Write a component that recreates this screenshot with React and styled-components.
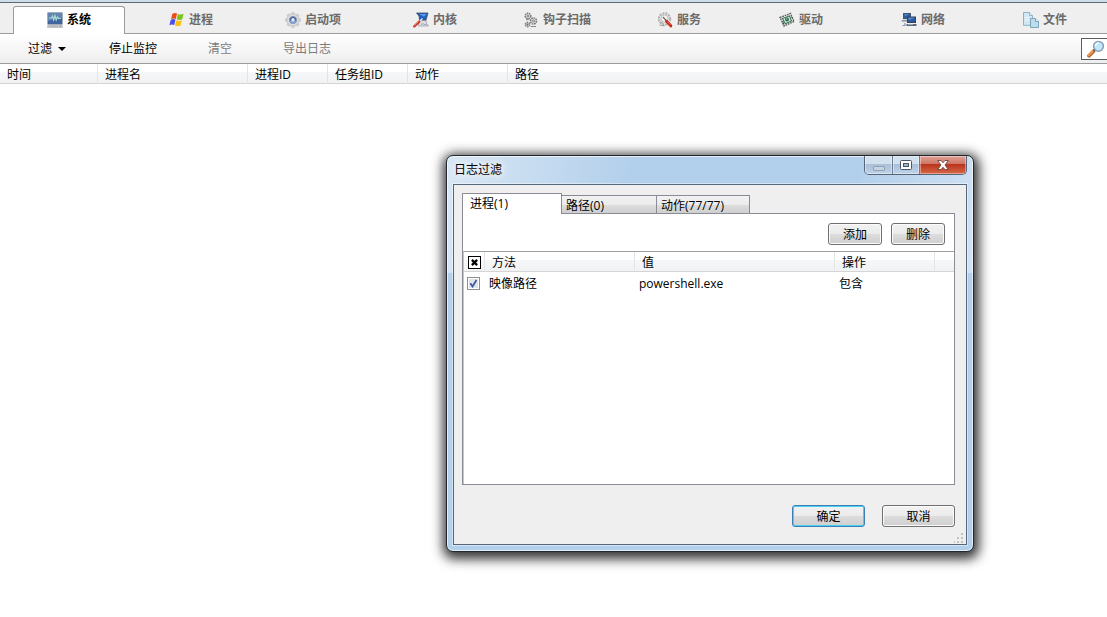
import React, { useState } from "react";
import styled, { createGlobalStyle, css } from "styled-components";

const SystemIcon = () => (
  <svg width="16" height="16" viewBox="0 0 16 16" aria-hidden="true">
    <rect x="0.500" y="0.500" width="15" height="12" rx="0.800" fill="#41659f" stroke="#a3acb9" />
    <path d="M1 1h14v5L1 9z" fill="#6484b4" />
    <path d="M2 6h2.500l1-2 1.200 4L8 3.500l1.200 4.500 1.300-3 1 1.500h2.500" fill="none" stroke="#a9ddd0" strokeWidth="1.200" />
    <path d="M1 13h14l0.600 2.500H0.400z" fill="#d2d3d6" stroke="#a8aaae" strokeWidth="0.600" />
    <path d="M2 14.200h9" stroke="#9a9ca1" strokeWidth="0.700" />
    <rect x="12.500" y="13.700" width="1.500" height="1" fill="#777e8a" />
  </svg>
);

const ProcessIcon = () => (
  <svg width="16" height="16" viewBox="0 0 16 16" aria-hidden="true">
    <path d="M3.300 1.900C5 .7 6.500.8 8.100 1.600L6.800 7C5.200 6.200 3.700 6.200 2 7.200z" fill="#ee4b1c" />
    <path d="M8.800 1.900c1.700.9 3.600 1 5.800-.1L13.300 7.300c-1.900 1-3.700.9-5.600 0z" fill="#7cc514" />
    <path d="M1.700 7.900c1.700-1 3.200-1 4.800-.2L5.200 13.100C3.600 12.300 2.100 12.300.4 13.300z" fill="#4a4fe8" />
    <path d="M7.300 8.200c1.800.9 3.700.9 5.600 0L11.600 13.600c-1.800 1-3.700.9-5.600 0z" fill="#fbc014" />
  </svg>
);

const gearTeeth = [0, 45, 90, 135, 180, 225, 270, 315];

const StartupIcon = () => (
  <svg width="16" height="16" viewBox="0 0 16 16" aria-hidden="true">
    {gearTeeth.map((deg) => (
      <rect
        key={deg}
        x="6.500"
        y="0.400"
        width="3"
        height="4"
        rx="0.800"
        fill="#cfd1d4"
        stroke="#b3b6ba"
        strokeWidth="0.400"
        transform={`rotate(${deg} 8 8)`}
      />
    ))}
    <circle cx="8" cy="8" r="6" fill="#dcdee1" stroke="#b7babf" strokeWidth="0.600" />
    <circle cx="8" cy="8" r="3.600" fill="#3e5b95" stroke="#8796b3" />
    <path d="M5 8.500a3 3 0 0 0 6 0z" fill="#7fa6d8" />
    <circle cx="8" cy="7.700" r="1.700" fill="#e8f1fa" />
  </svg>
);

const KernelIcon = () => (
  <svg width="16" height="16" viewBox="0 0 16 16" aria-hidden="true">
    <path d="M6 8.500L13 8l0.500 3.500 2 2.500H5.500z" fill="#dde1e6" stroke="#8e97a2" strokeWidth="0.700" />
    <path d="M3.500 1h11.500l-2 7H6.500L6 4z" fill="#1f5fc2" stroke="#414d5e" strokeWidth="0.800" />
    <path d="M6 2h7.500L11 4.800z" fill="#5d98ea" />
    <path d="M8 12.500c2-1.800 3 0.600 5.500 0" fill="none" stroke="#98a0aa" />
    <path d="M1.300 14.300L6.500 9.300" stroke="#cf3427" strokeWidth="2.400" strokeLinecap="round" />
    <path d="M1.300 13.700L5.800 9.300" stroke="#f39a86" strokeWidth="0.700" />
    <path d="M6.800 9L9.500 6.500" stroke="#e8ebef" strokeWidth="1.400" />
  </svg>
);

const HookIcon = () => (
  <svg width="16" height="16" viewBox="0 0 16 16" aria-hidden="true">
    <g fill="#e0e0e0" stroke="#7d7d7d">
      <circle cx="5" cy="4" r="2.800" strokeWidth="1.500" strokeDasharray="1.600 0.700" />
      <circle cx="5" cy="4" r="0.900" fill="#fff" />
      <circle cx="10.500" cy="9" r="3" strokeWidth="1.600" strokeDasharray="1.600 0.700" />
      <circle cx="10.500" cy="9" r="1" fill="#fff" />
      <circle cx="4.500" cy="12.500" r="2.200" strokeWidth="1.400" strokeDasharray="1.400 0.700" />
      <circle cx="4.500" cy="12.500" r="0.700" fill="#555" />
    </g>
    <path d="M7.500 14.500h5.500M3 8l3-1" stroke="#8a8a8a" />
  </svg>
);

const ServiceIcon = () => (
  <svg width="16" height="16" viewBox="0 0 16 16" aria-hidden="true">
    <circle cx="7.500" cy="7" r="5.700" fill="#ececec" stroke="#b0b0b0" strokeWidth="2" strokeDasharray="2 1" />
    <circle cx="7.500" cy="6.500" r="3.600" fill="#f8f8f8" stroke="#a9a9a9" strokeWidth="0.800" />
    <path d="M2.500 13l5 1M3.500 9.500l3.500 3" stroke="#9c9c9c" />
    <path d="M6 5L10 9.500" stroke="#6e6e6e" strokeWidth="1.500" />
    <path d="M9.500 9.300L13.800 13.800" stroke="#c8281a" strokeWidth="3" strokeLinecap="round" />
    <path d="M10 9.300L13.500 12.800" stroke="#f07a64" strokeWidth="0.800" />
  </svg>
);

const DriverIcon = () => (
  <svg width="16" height="16" viewBox="0 0 16 16" aria-hidden="true">
    <path d="M1 5.500L11.500 1.500 15 9.500 5 14z" fill="#f0f3f1" stroke="#59625d" strokeWidth="1.400" strokeDasharray="1.700 0.800" />
    <path d="M3.500 6.500L10.500 4 12.500 9 6.300 11.700z" fill="#dcebe2" stroke="#3f7659" strokeWidth="1.100" />
    <circle cx="8" cy="7.500" r="2" fill="#1f6a47" />
    <circle cx="7.800" cy="7" r="0.700" fill="#b9dcc8" />
    <path d="M3.500 9l1.500 3.500M12.500 4.500l1 2" stroke="#39463f" />
  </svg>
);

const NetworkIcon = () => (
  <svg width="16" height="16" viewBox="0 0 16 16" aria-hidden="true">
    <rect x="2.500" y="1.500" width="7" height="5" fill="#2d5da3" stroke="#45526a" />
    <path d="M0.800 8.700h6" stroke="#8f97a3" strokeWidth="1.800" />
    <rect x="6.500" y="5" width="8" height="5.500" fill="#2a59a0" stroke="#34425a" />
    <path d="M7.200 5.700h6.600L8 8z" fill="#5e8fd0" />
    <path d="M5.500 13h10" stroke="#5e6977" strokeWidth="2" />
    <path d="M7 12.600h5" stroke="#c3cad3" strokeWidth="0.700" />
    <path d="M1.500 13.500h2.500v-2.500" fill="none" stroke="#7a9cc4" strokeWidth="1.200" />
    <path d="M3.200 2.200h5L4 4z" fill="#5e8fd0" />
  </svg>
);

const FileIcon = () => (
  <svg width="16" height="16" viewBox="0 0 16 16" aria-hidden="true">
    <path d="M0.500 0.500h6L9.500 3.500v9.800h-9z" fill="#d4e8f3" stroke="#8db2c8" />
    <path d="M6.500 0.500v3h3" fill="#f2fafd" stroke="#8db2c8" />
    <path d="M7.500 6.500h5l3 3v6h-8z" fill="#bcdcec" stroke="#7ba5bd" />
    <path d="M12.500 6.500v3h3" fill="#eef8fc" stroke="#7ba5bd" />
    <path d="M2 5.500h4M2 8h4" stroke="#ecf6fa" />
  </svg>
);

const SearchIcon = () => (
  <svg width="18" height="18" viewBox="0 0 18 18" aria-hidden="true">
    <path d="M2 15.800L6.500 11.200" stroke="#a8622c" strokeWidth="3.600" strokeLinecap="round" />
    <path d="M1.800 15.200L6.300 10.800" stroke="#f2994a" strokeWidth="2" strokeLinecap="round" />
    <path d="M6.500 11L8.500 9" stroke="#565a68" strokeWidth="2.200" />
    <circle cx="11.500" cy="6.300" r="4.900" fill="#bfe8fa" stroke="#8a9db8" strokeWidth="1.500" />
    <path d="M8.500 6.300c0-2 1.400-3.200 3.300-3.200" fill="none" stroke="#fff" strokeWidth="1.500" />
  </svg>
);

const tabs = [
  { label: "系统", Icon: SystemIcon },
  { label: "进程", Icon: ProcessIcon },
  { label: "启动项", Icon: StartupIcon },
  { label: "内核", Icon: KernelIcon },
  { label: "钩子扫描", Icon: HookIcon },
  { label: "服务", Icon: ServiceIcon },
  { label: "驱动", Icon: DriverIcon },
  { label: "网络", Icon: NetworkIcon },
  { label: "文件", Icon: FileIcon },
];

const logColumns = [
  { label: "时间", width: 98 },
  { label: "进程名", width: 150 },
  { label: "进程ID", width: 80 },
  { label: "任务组ID", width: 80 },
  { label: "动作", width: 100 },
  { label: "路径" },
];

const filterTabs = [
  { label: "进程(1)", width: 100 },
  { label: "路径(0)", width: 95 },
  { label: "动作(77/77)", width: 93 },
];

const FilterDialog = () => {
  const [active, setActive] = useState(0);
  const [checked, setChecked] = useState(true);

  return (
    <Dialog role="dialog" aria-labelledby="filter-title">
      <TitleBar>
        <Title id="filter-title">日志过滤</Title>
        <WindowButtons>
          <WindowButton $width={27} aria-label="最小化" disabled>
            <svg width="12" height="5" viewBox="0 0 12 5">
              <rect x="0.500" y="0.500" width="11" height="4" rx="0.500" fill="#c6d3e0" stroke="#91a2b5" />
            </svg>
          </WindowButton>
          <WindowButton $width={27} aria-label="最大化">
            <svg width="12" height="10" viewBox="0 0 12 10">
              <rect x="0.500" y="0.500" width="11" height="9" rx="1" fill="#fff" stroke="#4b5664" />
              <rect x="3.500" y="3.500" width="5" height="3" fill="#9eb4cb" stroke="#4b5664" />
            </svg>
          </WindowButton>
          <WindowButton $width={47} $close aria-label="关闭">
            <svg width="12" height="10" viewBox="0 0 12 10">
              <path
                d="M0.700 0.500h3.300L6 2.700 8 0.500h3.300L8 5l3.300 4.500H8L6 7.300 4 9.500H0.700L4 5z"
                fill="#fff"
                stroke="#5d3a3a"
                strokeWidth="0.800"
              />
            </svg>
          </WindowButton>
        </WindowButtons>
      </TitleBar>
      <DialogBody>
        <FilterTabs role="tablist">
          {filterTabs.map((tab, i) => (
            <FilterTab
              key={tab.label}
              role="tab"
              aria-selected={active === i}
              $active={active === i}
              $width={tab.width}
              onClick={() => setActive(i)}
            >
              {tab.label}
            </FilterTab>
          ))}
        </FilterTabs>
        <FilterPanel>
          <PanelActions>
            <PushButton $width={54}>添加</PushButton>
            <PushButton $width={54}>删除</PushButton>
          </PanelActions>
          <FilterList>
            <FilterTable>
              <colgroup>
                <col width="21" />
                <col width="150" />
                <col width="200" />
                <col width="100" />
                <col />
              </colgroup>
              <thead>
                <tr>
                  <HeadCell $flush>
                    <CheckBox $cross>
                      <input type="checkbox" aria-label="全选" defaultChecked />
                      <svg width="7" height="7" viewBox="0 0 8 8">
                        <path d="M1 1l6 6M7 1L1 7" stroke="#000" strokeWidth="2.600" />
                      </svg>
                    </CheckBox>
                  </HeadCell>
                  <HeadCell>方法</HeadCell>
                  <HeadCell>值</HeadCell>
                  <HeadCell>操作</HeadCell>
                  <HeadCell $last />
                </tr>
              </thead>
              <tbody>
                <tr>
                  <Cell $flush>
                    <CheckBox>
                      <input
                        type="checkbox"
                        aria-label="映像路径"
                        checked={checked}
                        onChange={(e) => setChecked(e.target.checked)}
                      />
                      {checked && (
                        <svg width="9" height="9" viewBox="0 0 9 9">
                          <path d="M1.300 4.300L3.500 7.500 7.500 1" fill="none" stroke="#44599a" strokeWidth="1.800" />
                        </svg>
                      )}
                    </CheckBox>
                  </Cell>
                  <Cell>映像路径</Cell>
                  <Cell>powershell.exe</Cell>
                  <Cell>包含</Cell>
                  <Cell />
                </tr>
              </tbody>
            </FilterTable>
          </FilterList>
        </FilterPanel>
        <DialogFooter>
          <PushButton $width={73} $primary>
            确定
          </PushButton>
          <PushButton $width={73}>取消</PushButton>
        </DialogFooter>
        <Grip width="10" height="10" viewBox="0 0 10 10" aria-hidden="true">
          <path
            d="M7 0h2v2h-2zM7 4h2v2h-2zM7 8h2v2h-2zM3 4h2v2h-2zM3 8h2v2h-2zM0 8h1v2h-1z"
            fill="#c2c2c2"
          />
        </Grip>
      </DialogBody>
    </Dialog>
  );
};

const App = () => {
  const [active, setActive] = useState(0);

  return (
    <>
      <GlobalStyle />
      <Window>
        <MainTabs role="tablist">
          {tabs.map(({ label, Icon }, i) => (
            <MainTab
              key={label}
              role="tab"
              aria-selected={active === i}
              $active={active === i}
              onClick={() => setActive(i)}
            >
              <Icon />
              {label}
            </MainTab>
          ))}
        </MainTabs>
        <Toolbar>
          <ToolButton>
            过滤 <Caret />
          </ToolButton>
          <ToolButton>停止监控</ToolButton>
          <ToolButton disabled>清空</ToolButton>
          <ToolButton disabled>导出日志</ToolButton>
          <SearchButton aria-label="搜索">
            <SearchIcon />
          </SearchButton>
        </Toolbar>
        <LogTable>
          <colgroup>
            {logColumns.map((col) => (
              <col key={col.label} width={col.width} />
            ))}
          </colgroup>
          <thead>
            <tr>
              {logColumns.map((col, i) => (
                <HeadCell key={col.label} $last={i === logColumns.length - 1}>
                  {col.label}
                </HeadCell>
              ))}
            </tr>
          </thead>
        </LogTable>
        <FilterDialog />
      </Window>
    </>
  );
};

export default App;

const GlobalStyle = createGlobalStyle`
  * {
    box-sizing: border-box;
  }
  body {
    margin: 0;
    background: #fff;
  }
  body, button, input {
    font-family: "Open Sans", "Noto Sans CJK SC", sans-serif;
    font-size: 12px;
    line-height: 16px;
    color: #000;
  }
  button {
    margin: 0;
    padding: 0;
    border: none;
    background: none;
  }
  svg {
    display: block;
    flex: none;
  }
`;

const Window = styled.main`
  position: relative;
  min-height: 100vh;
  overflow: hidden;
  border-top: 2px solid #cfdbe8;
`;

const MainTabs = styled.div`
  display: flex;
  align-items: flex-end;
  gap: 10px;
  height: 32px;
  padding-left: 13px;
  background: #efefef;
  border-top: 1px solid #5f6875;
  border-bottom: 1px solid #9b9b9b;
`;

const MainTab = styled.button`
  display: flex;
  align-items: center;
  justify-content: center;
  gap: 4px;
  flex: none;
  width: 112px;
  height: 28px;
  border: 1px solid transparent;
  border-bottom: none;
  font-weight: bold;
  color: #6b6b6b;
  ${({ $active }) =>
    $active &&
    css`
      margin-bottom: -1px;
      padding-bottom: 2px;
      background: #fff;
      border-color: #9b9b9b;
      border-radius: 3px 3px 0 0;
      color: #000;
    `}
`;

const Toolbar = styled.div`
  display: flex;
  align-items: center;
  height: 30px;
  padding-left: 28px;
  gap: 43px;
  background: linear-gradient(#fff, #eee);
  border-bottom: 1px solid #9b9b9b;
`;

const ToolButton = styled.button`
  display: flex;
  align-items: center;
  gap: 6px;
  & + & {
    margin-right: 8px;
  }
  &:disabled {
    color: #7c7c7c;
  }
`;

const Caret = styled.span`
  border: 4px solid transparent;
  border-top-color: #000;
  border-bottom: none;
`;

const SearchButton = styled.button`
  display: flex;
  align-items: center;
  width: 26px;
  height: 22px;
  margin-left: auto;
  padding-left: 5px;
  background: #fff;
  border: 1px solid #5c5c5c;
  border-right: none;
`;

const LogTable = styled.table`
  width: 100%;
  table-layout: fixed;
  border-spacing: 0;
`;

const HeadCell = styled.th`
  height: 20px;
  padding: 3px 0 0 7px;
  text-align: left;
  vertical-align: top;
  font-weight: normal;
  line-height: 16px;
  white-space: nowrap;
  background: linear-gradient(#fff 8px, #f6f7f8 8px, #f1f2f4);
  border-right: ${({ $last }) => ($last ? "none" : "1px solid #e2e4e6")};
  border-bottom: 1px solid #d5d5d5;
  ${({ $flush }) => $flush && "padding: 4px 0 0 4px;"}
`;

const Cell = styled.td`
  height: 22px;
  padding: 2px 0 0 4px;
  white-space: nowrap;
  ${({ $flush }) => $flush && "padding: 0 0 0 3px;"}
`;

const Dialog = styled.section`
  position: absolute;
  top: 153px;
  left: 446px;
  width: 528px;
  padding: 0 6px 6px;
  background: linear-gradient(
      100deg,
      rgba(255, 255, 255, 0.5),
      rgba(255, 255, 255, 0) 35%,
      rgba(255, 255, 255, 0) 75%,
      rgba(255, 255, 255, 0.4)
    )
    no-repeat 0 0 / 100% 117px,
    #b2cfeb;
  border: 1px solid #22272e;
  border-radius: 7px;
  box-shadow: inset 0 0 0 1px rgba(255, 255, 255, 0.65),
    1px 3px 12px 4px rgba(0, 0, 0, 0.8);
`;

const TitleBar = styled.header`
  display: flex;
  align-items: flex-start;
  justify-content: space-between;
  height: 28px;
`;

const Title = styled.h1`
  margin: 0;
  padding: 6px 1px;
  font-size: 12px;
  font-weight: normal;
  line-height: 16px;
  text-shadow: 0 0 8px #fff, 0 0 8px #fff;
`;

const WindowButtons = styled.div`
  display: flex;
  border: 1px solid #566579;
  border-top: none;
  border-radius: 0 0 5px 5px;
  overflow: hidden;
`;

const WindowButton = styled.button`
  display: flex;
  align-items: center;
  justify-content: center;
  width: ${({ $width }) => $width}px;
  height: 18px;
  background: linear-gradient(#d3e0ee 8px, #a9bfd7 8px, #bfd3e8);
  box-shadow: inset 0 0 0 1px rgba(255, 255, 255, 0.4);
  & + & {
    border-left: 1px solid #6c7d92;
  }
  &:disabled {
    padding-top: 6px;
  }
  ${({ $close }) =>
    $close &&
    css`
      background: linear-gradient(#e0a297, #cf7463 8px, #b8321b 8px, #d66a47);
    `}
`;

const DialogBody = styled.div`
  position: relative;
  padding: 8px 11px 17px 8px;
  background: #efefef;
  border: 1px solid #56677a;
  box-shadow: 0 0 0 1px rgba(255, 255, 255, 0.45);
`;

const FilterTabs = styled.div`
  display: flex;
  align-items: flex-end;
  height: 20px;
`;

const FilterTab = styled.button`
  width: ${({ $width }) => $width}px;
  height: 18px;
  padding: 2px 0 0 4px;
  text-align: left;
  line-height: 16px;
  background: linear-gradient(#f2f2f2, #ebebeb 9px, #dddddd 9px, #cfcfcf);
  border: 1px solid #898c95;
  border-left: none;
  border-bottom: none;
  ${({ $active }) =>
    $active &&
    css`
      position: relative;
      height: 21px;
      margin-bottom: -1px;
      padding: 0 0 0 7px;
      background: #fff;
      border-left: 1px solid #898c95;
    `}
`;

const FilterPanel = styled.div`
  background: #fff;
  border: 1px solid #898c95;
`;

const PanelActions = styled.div`
  display: flex;
  justify-content: flex-end;
  gap: 9px;
  padding: 9px 9px 6px;
`;

const PushButton = styled.button`
  width: ${({ $width }) => $width}px;
  height: 22px;
  padding-top: 1px;
  text-align: center;
  background: linear-gradient(#f2f2f2, #ebebeb 10px, #dddddd 10px, #cfcfcf);
  border: 1px solid #707070;
  border-radius: 3px;
  box-shadow: inset 0 0 0 1px #fbfbfb;
  ${({ $primary }) =>
    $primary &&
    css`
      border-color: #3c7fb1;
      box-shadow: inset 0 0 0 1px #48d0f5;
    `}
`;

const FilterList = styled.div`
  min-height: 233px;
  border-top: 1px solid #a0a0a0;
  border-left: 1px solid #c4c6ca;
`;

const FilterTable = styled.table`
  width: 100%;
  table-layout: fixed;
  border-spacing: 0;
`;

const CheckBox = styled.label`
  position: relative;
  display: flex;
  align-items: center;
  justify-content: center;
  width: 13px;
  height: 13px;
  input {
    position: absolute;
    inset: 0;
    width: 13px;
    height: 13px;
    margin: 0;
    appearance: none;
    background: ${({ $cross }) => ($cross ? "#fff" : "#dfe4ec")};
    border: 1px solid ${({ $cross }) => ($cross ? "#000" : "#8e8f8f")};
    box-shadow: inset 0 0 0 1px #fff;
  }
  svg {
    position: relative;
    pointer-events: none;
  }
`;

const DialogFooter = styled.footer`
  display: flex;
  justify-content: flex-end;
  gap: 17px;
  padding-top: 20px;
`;

const Grip = styled.svg`
  position: absolute;
  right: 2px;
  bottom: 1px;
`;
